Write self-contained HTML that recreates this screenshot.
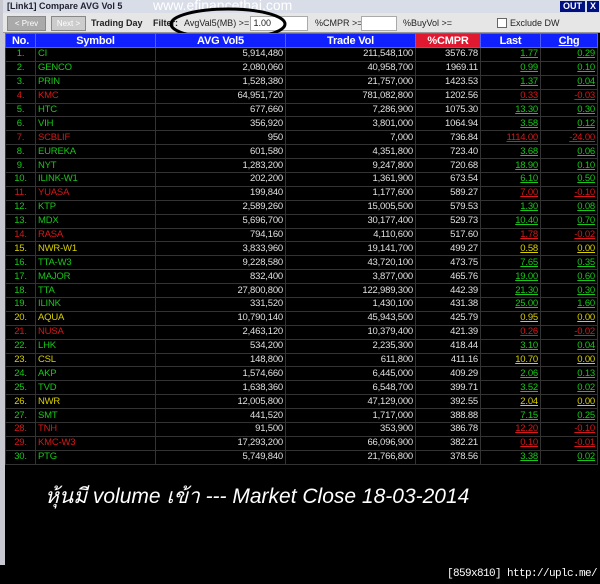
<!DOCTYPE html>
<html><head><meta charset="utf-8"><style>
body{margin:0;width:600px;height:584px;background:#000;overflow:hidden;font-family:"Liberation Sans",sans-serif;position:relative}
#win{position:absolute;left:0;top:0;width:600px;height:565px;background:#000;border-left:5px solid #c8c8d0;box-sizing:border-box}
#title{position:absolute;left:-2px;top:0;width:597px;height:13px;background:#d8dde8;font-size:9px;font-weight:bold;color:#223;line-height:13px;padding-left:4px;box-sizing:border-box}
#tb{position:absolute;left:-2px;top:13px;width:597px;height:20px;background:#e6e6e6;border-bottom:1px solid #999;box-sizing:border-box;font-size:9px;color:#222}
.b{position:absolute;top:3px;height:13px;border:1px solid #888;font-size:8px;line-height:13px;text-align:center;color:#fff;background:#aaa}
.in{position:absolute;top:3px;height:13px;background:#fff;border:1px solid #aaa}
table{position:absolute;left:0;top:33px;border-collapse:collapse;table-layout:fixed;font-size:9.5px;letter-spacing:-0.2px}
td{height:12.9px;padding:0 2px;border:1px solid #333;white-space:nowrap;line-height:12px}
th{height:13px;background:#1020ff;color:#fff;font-size:11px;padding:0;border:1px solid #5060ff}
.g{color:#18c818}.r{color:#d81818}.y{color:#d8d000}
.n{text-align:center}.w{color:#e0e0e0;text-align:right}
.u{text-decoration:underline;text-align:right}
</style></head><body>
<div id="win">
<div id="title">[Link1] Compare AVG Vol 5 <span style="font-weight:normal;color:#fff;font-size:14px;position:absolute;left:150px;top:-1px">www.efinancethai.com</span>
<span style="position:absolute;left:557px;top:1px;width:25px;height:11px;background:#001080;color:#fff;text-align:center;line-height:11px">OUT</span>
<span style="position:absolute;left:584px;top:1px;width:12px;height:11px;background:#001080;color:#fff;text-align:center;line-height:11px">X</span></div>
<div id="tb">
<div class="b" style="left:4px;width:37px">&lt; Prev</div>
<div class="b" style="left:48px;width:33px;background:#ccc">Next &gt;</div>
<span style="position:absolute;left:88px;top:5px;font-weight:bold">Trading Day</span>
<span style="position:absolute;left:150px;top:5px;font-weight:bold">Filter:</span>
<span style="position:absolute;left:181px;top:5px">AvgVal5(MB) &gt;=</span>
<div class="in" style="left:247px;width:56px;font-size:9px;line-height:13px">&nbsp;1.00</div>
<span style="position:absolute;left:312px;top:5px">%CMPR &gt;=</span>
<div class="in" style="left:358px;width:34px"></div>
<span style="position:absolute;left:400px;top:5px">%BuyVol &gt;=</span>
<div style="position:absolute;left:494px;top:5px;width:8px;height:8px;background:#fff;border:1px solid #666"></div>
<span style="position:absolute;left:507px;top:5px">Exclude DW</span>
</div>
<svg style="position:absolute;left:163px;top:6px" width="122" height="36"><ellipse cx="60" cy="18" rx="57" ry="15" fill="none" stroke="#000" stroke-width="3"/></svg>
<table>
<colgroup><col style="width:30px"><col style="width:120px"><col style="width:130px"><col style="width:130px"><col style="width:65px"><col style="width:60px"><col style="width:57px"></colgroup>
<tr><th>No.</th><th>Symbol</th><th>AVG Vol5</th><th>Trade Vol</th><th style="background:#e01830">%CMPR</th><th>Last</th><th style="text-decoration:underline">Chg</th></tr>
<tr class="g"><td class="n">1.</td><td>CI</td><td class="w">5,914,480</td><td class="w">211,548,100</td><td class="w">3576.78</td><td class="u">1.77</td><td class="u">0.29</td></tr>
<tr class="g"><td class="n">2.</td><td>GENCO</td><td class="w">2,080,060</td><td class="w">40,958,700</td><td class="w">1969.11</td><td class="u">0.99</td><td class="u">0.10</td></tr>
<tr class="g"><td class="n">3.</td><td>PRIN</td><td class="w">1,528,380</td><td class="w">21,757,000</td><td class="w">1423.53</td><td class="u">1.37</td><td class="u">0.04</td></tr>
<tr class="r"><td class="n">4.</td><td>KMC</td><td class="w">64,951,720</td><td class="w">781,082,800</td><td class="w">1202.56</td><td class="u">0.33</td><td class="u">-0.03</td></tr>
<tr class="g"><td class="n">5.</td><td>HTC</td><td class="w">677,660</td><td class="w">7,286,900</td><td class="w">1075.30</td><td class="u">13.30</td><td class="u">0.30</td></tr>
<tr class="g"><td class="n">6.</td><td>VIH</td><td class="w">356,920</td><td class="w">3,801,000</td><td class="w">1064.94</td><td class="u">3.58</td><td class="u">0.12</td></tr>
<tr class="r"><td class="n">7.</td><td>SCBLIF</td><td class="w">950</td><td class="w">7,000</td><td class="w">736.84</td><td class="u">1114.00</td><td class="u">-24.00</td></tr>
<tr class="g"><td class="n">8.</td><td>EUREKA</td><td class="w">601,580</td><td class="w">4,351,800</td><td class="w">723.40</td><td class="u">3.68</td><td class="u">0.06</td></tr>
<tr class="g"><td class="n">9.</td><td>NYT</td><td class="w">1,283,200</td><td class="w">9,247,800</td><td class="w">720.68</td><td class="u">18.90</td><td class="u">0.10</td></tr>
<tr class="g"><td class="n">10.</td><td>ILINK-W1</td><td class="w">202,200</td><td class="w">1,361,900</td><td class="w">673.54</td><td class="u">6.10</td><td class="u">0.50</td></tr>
<tr class="r"><td class="n">11.</td><td>YUASA</td><td class="w">199,840</td><td class="w">1,177,600</td><td class="w">589.27</td><td class="u">7.00</td><td class="u">-0.10</td></tr>
<tr class="g"><td class="n">12.</td><td>KTP</td><td class="w">2,589,260</td><td class="w">15,005,500</td><td class="w">579.53</td><td class="u">1.30</td><td class="u">0.08</td></tr>
<tr class="g"><td class="n">13.</td><td>MDX</td><td class="w">5,696,700</td><td class="w">30,177,400</td><td class="w">529.73</td><td class="u">10.40</td><td class="u">0.70</td></tr>
<tr class="r"><td class="n">14.</td><td>RASA</td><td class="w">794,160</td><td class="w">4,110,600</td><td class="w">517.60</td><td class="u">1.78</td><td class="u">-0.02</td></tr>
<tr class="y"><td class="n">15.</td><td>NWR-W1</td><td class="w">3,833,960</td><td class="w">19,141,700</td><td class="w">499.27</td><td class="u">0.58</td><td class="u">0.00</td></tr>
<tr class="g"><td class="n">16.</td><td>TTA-W3</td><td class="w">9,228,580</td><td class="w">43,720,100</td><td class="w">473.75</td><td class="u">7.65</td><td class="u">0.35</td></tr>
<tr class="g"><td class="n">17.</td><td>MAJOR</td><td class="w">832,400</td><td class="w">3,877,000</td><td class="w">465.76</td><td class="u">19.00</td><td class="u">0.60</td></tr>
<tr class="g"><td class="n">18.</td><td>TTA</td><td class="w">27,800,800</td><td class="w">122,989,300</td><td class="w">442.39</td><td class="u">21.30</td><td class="u">0.30</td></tr>
<tr class="g"><td class="n">19.</td><td>ILINK</td><td class="w">331,520</td><td class="w">1,430,100</td><td class="w">431.38</td><td class="u">25.00</td><td class="u">1.60</td></tr>
<tr class="y"><td class="n">20.</td><td>AQUA</td><td class="w">10,790,140</td><td class="w">45,943,500</td><td class="w">425.79</td><td class="u">0.95</td><td class="u">0.00</td></tr>
<tr class="r"><td class="n">21.</td><td>NUSA</td><td class="w">2,463,120</td><td class="w">10,379,400</td><td class="w">421.39</td><td class="u">0.26</td><td class="u">-0.02</td></tr>
<tr class="g"><td class="n">22.</td><td>LHK</td><td class="w">534,200</td><td class="w">2,235,300</td><td class="w">418.44</td><td class="u">3.10</td><td class="u">0.04</td></tr>
<tr class="y"><td class="n">23.</td><td>CSL</td><td class="w">148,800</td><td class="w">611,800</td><td class="w">411.16</td><td class="u">10.70</td><td class="u">0.00</td></tr>
<tr class="g"><td class="n">24.</td><td>AKP</td><td class="w">1,574,660</td><td class="w">6,445,000</td><td class="w">409.29</td><td class="u">2.06</td><td class="u">0.13</td></tr>
<tr class="g"><td class="n">25.</td><td>TVD</td><td class="w">1,638,360</td><td class="w">6,548,700</td><td class="w">399.71</td><td class="u">3.52</td><td class="u">0.02</td></tr>
<tr class="y"><td class="n">26.</td><td>NWR</td><td class="w">12,005,800</td><td class="w">47,129,000</td><td class="w">392.55</td><td class="u">2.04</td><td class="u">0.00</td></tr>
<tr class="g"><td class="n">27.</td><td>SMT</td><td class="w">441,520</td><td class="w">1,717,000</td><td class="w">388.88</td><td class="u">7.15</td><td class="u">0.25</td></tr>
<tr class="r"><td class="n">28.</td><td>TNH</td><td class="w">91,500</td><td class="w">353,900</td><td class="w">386.78</td><td class="u">12.20</td><td class="u">-0.10</td></tr>
<tr class="r"><td class="n">29.</td><td>KMC-W3</td><td class="w">17,293,200</td><td class="w">66,096,900</td><td class="w">382.21</td><td class="u">0.10</td><td class="u">-0.01</td></tr>
<tr class="g"><td class="n">30.</td><td>PTG</td><td class="w">5,749,840</td><td class="w">21,766,800</td><td class="w">378.56</td><td class="u">3.38</td><td class="u">0.02</td></tr>
</table>
<div style="position:absolute;left:40px;top:480px;color:#fff;font-size:21px;font-style:italic;font-family:'Liberation Sans','Noto Sans CJK SC',sans-serif;white-space:nowrap">หุ้นมี volume เข้า --- Market Close 18-03-2014</div>
</div>
<div style="position:absolute;right:3px;top:568px;color:#fff;font-size:11px;font-family:'Liberation Mono',monospace;letter-spacing:-0.6px">[859x810] http://uplc.me/</div>
</body></html>
